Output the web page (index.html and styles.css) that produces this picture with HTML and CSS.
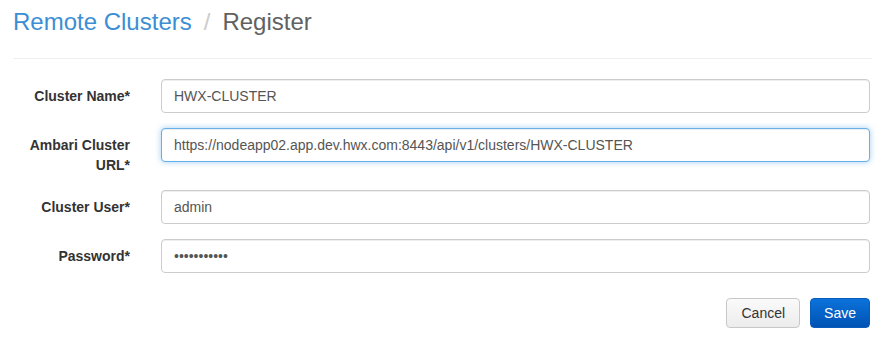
FILE: index.html
```html
<!DOCTYPE html>
<html lang="en">
<head>
    <meta charset="UTF-8">
    <meta name="viewport" content="width=device-width, initial-scale=1.0">
    <title>Remote Clusters / Register</title>
    <link rel="stylesheet" href="styles.css">
</head>
<body>
    <div class="page">
        <h2 class="page-title">
            <span class="crumb-link">Remote Clusters</span><span class="crumb-sep">/</span><span class="crumb-current">Register</span>
        </h2>
        <hr class="divider">

        <form class="register-form">
            <div class="form-group">
                <label class="form-label" for="clusterName">Cluster Name*</label>
                <input class="form-control" id="clusterName" type="text" value="HWX-CLUSTER">
            </div>
            <div class="form-group">
                <label class="form-label" for="clusterUrl">Ambari Cluster URL*</label>
                <input class="form-control is-focused" id="clusterUrl" type="text" value="https://nodeapp02.app.dev.hwx.com:8443/api/v1/clusters/HWX-CLUSTER">
            </div>
            <div class="form-group">
                <label class="form-label" for="clusterUser">Cluster User*</label>
                <input class="form-control" id="clusterUser" type="text" value="admin">
            </div>
            <div class="form-group">
                <label class="form-label" for="clusterPassword">Password*</label>
                <input class="form-control" id="clusterPassword" type="text" value="•••••••••••">
            </div>

            <div class="form-actions">
                <button type="button" class="btn btn-default">Cancel</button>
                <button type="button" class="btn btn-primary">Save</button>
            </div>
        </form>
    </div>
</body>
</html>
```

FILE: styles.css
```css
body {
    margin: 0;
    font-family: "Liberation Sans", Arial, sans-serif;
    font-size: 14px;
    line-height: 20px;
    color: #333;
    background: #fff;
}

.page {
    padding: 9px 19px 0 13px;
}

.page-title {
    margin: 0;
    font-size: 24px;
    line-height: 26px;
    font-weight: normal;
}

.crumb-link {
    color: #3b8ed4;
}

.crumb-sep {
    color: #ccc;
    padding: 0 12px;
}

.crumb-current {
    color: #616161;
}

.divider {
    border: 0;
    border-top: 1px solid #eee;
    margin: 23px -2px 20px 0;
}

.form-group {
    display: flex;
    align-items: flex-start;
    margin-bottom: 15px;
}

.form-label {
    width: 117px;
    flex-shrink: 0;
    margin-right: 31px;
    padding-top: 7px;
    text-align: right;
    font-weight: bold;
    color: #333;
}

.form-control {
    flex: 1;
    height: 34px;
    box-sizing: border-box;
    padding: 6px 12px;
    border: 1px solid #ccc;
    border-radius: 4px;
    box-shadow: inset 0 1px 1px rgba(0, 0, 0, 0.075);
    font-family: "Liberation Sans", Arial, sans-serif;
    font-size: 14px;
    line-height: 20px;
    color: #555;
    background: #fff;
    outline: none;
}

.form-control.is-focused {
    border-color: #66afe9;
    box-shadow: inset 0 1px 1px rgba(0, 0, 0, 0.075), 0 0 6px rgba(102, 175, 233, 0.6);
}

.form-actions {
    display: flex;
    justify-content: flex-end;
    gap: 10px;
    margin-top: 25px;
}

.btn {
    height: 30px;
    box-sizing: border-box;
    padding: 4px 14px;
    border: 1px solid transparent;
    border-radius: 4px;
    font-family: "Liberation Sans", Arial, sans-serif;
    font-size: 14px;
    line-height: 20px;
    cursor: pointer;
}

.btn-default {
    color: #333;
    background: linear-gradient(to bottom, #fafafa, #ececec);
    border-color: #c8c8c8;
}

.btn-primary {
    padding: 4px 13px;
    color: #fff;
    background: linear-gradient(to bottom, #0b73da, #0052b4);
    border-color: #0a5cba;
}
```
